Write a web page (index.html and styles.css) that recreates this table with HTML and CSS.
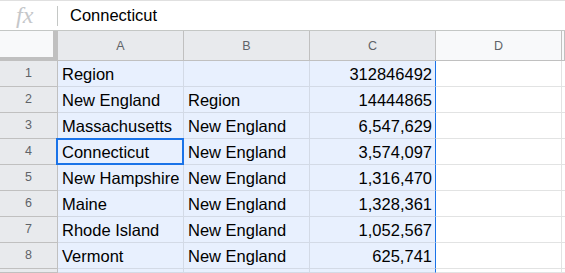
FILE: index.html
```html
<!DOCTYPE html>
<html>
<head>
<meta charset="utf-8">
<link rel="stylesheet" href="styles.css">
</head>
<body>
<div class="formula-bar">
  <span class="fx">fx</span>
  <span class="fsep"></span>
  <span class="fvalue">Connecticut</span>
</div>
<div class="grid">
  <div class="corner"></div>
  <div class="ch sel">A</div>
  <div class="ch sel">B</div>
  <div class="ch sel">C</div>
  <div class="ch">D</div>
  <div class="ch"></div>

  <div class="rh">1</div>
  <div class="c s">Region</div>
  <div class="c s"></div>
  <div class="c s num selr">312846492</div>
  <div class="c"></div><div class="c"></div>

  <div class="rh">2</div>
  <div class="c s">New England</div>
  <div class="c s">Region</div>
  <div class="c s num selr">14444865</div>
  <div class="c"></div><div class="c"></div>

  <div class="rh">3</div>
  <div class="c s">Massachusetts</div>
  <div class="c s">New England</div>
  <div class="c s num selr">6,547,629</div>
  <div class="c"></div><div class="c"></div>

  <div class="rh">4</div>
  <div class="c s active">Connecticut</div>
  <div class="c s">New England</div>
  <div class="c s num selr">3,574,097</div>
  <div class="c"></div><div class="c"></div>

  <div class="rh">5</div>
  <div class="c s">New Hampshire</div>
  <div class="c s">New England</div>
  <div class="c s num selr">1,316,470</div>
  <div class="c"></div><div class="c"></div>

  <div class="rh">6</div>
  <div class="c s">Maine</div>
  <div class="c s">New England</div>
  <div class="c s num selr">1,328,361</div>
  <div class="c"></div><div class="c"></div>

  <div class="rh">7</div>
  <div class="c s">Rhode Island</div>
  <div class="c s">New England</div>
  <div class="c s num selr">1,052,567</div>
  <div class="c"></div><div class="c"></div>

  <div class="rh">8</div>
  <div class="c s">Vermont</div>
  <div class="c s">New England</div>
  <div class="c s num selr">625,741</div>
  <div class="c"></div><div class="c"></div>

  <div class="rh"></div>
  <div class="c s"></div>
  <div class="c s"></div>
  <div class="c s num selr"></div>
  <div class="c"></div><div class="c"></div>
</div>
</body>
</html>
```
FILE: styles.css
```css
html, body {
  margin: 0;
  padding: 0;
  background: #fff;
  overflow: hidden;
}
body {
  width: 565px;
  height: 273px;
  font-family: "Liberation Sans", Arial, sans-serif;
}
.formula-bar {
  box-sizing: border-box;
  height: 31px;
  border-top: 1px solid #e0e0e0;
  border-bottom: 1px solid #c4c7c5;
  display: flex;
  align-items: center;
}
.fx {
  width: 57px;
  padding-left: 16px;
  box-sizing: border-box;
  font-family: "Liberation Serif", serif;
  font-style: italic;
  font-size: 24px;
  color: #c5c7ca;
  line-height: 1;
  margin-top: -2px;
}
.fsep {
  width: 1px;
  height: 20px;
  background: #c4c7c5;
  margin-right: 12px;
}
.fvalue {
  font-size: 16.5px;
  color: #000;
}
.grid {
  display: grid;
  grid-template-columns: 58px 126px 126px 126px 126px 3px;
  grid-template-rows: 30px repeat(8, 26px) 4px;
}
.corner {
  box-sizing: border-box;
  background: #f8f9fa;
  border-right: 5px solid #c0c0c0;
  border-bottom: 4px solid #c0c0c0;
}
.ch {
  box-sizing: border-box;
  background: #f8f9fa;
  border-right: 1px solid #c0c0c0;
  border-bottom: 1px solid #c0c0c0;
  color: #5f6368;
  font-size: 12.5px;
  display: flex;
  align-items: center;
  justify-content: center;
}
.ch.sel {
  background: #e8eaed;
}
.rh {
  box-sizing: border-box;
  background: #e8eaed;
  border-right: 1px solid #c0c0c0;
  border-bottom: 1px solid #c0c0c0;
  color: #5f6368;
  font-size: 12.5px;
  display: flex;
  align-items: center;
  justify-content: center;
  padding-bottom: 2px;
}
.c {
  box-sizing: border-box;
  border-right: 1px solid #e2e3e3;
  border-bottom: 1px solid #e2e3e3;
  font-size: 16.5px;
  color: #000;
  display: flex;
  align-items: center;
  padding: 1px 3px 0 4px;
  white-space: nowrap;
  overflow: hidden;
  position: relative;
}
.c.s {
  background: #e8f0fe;
  border-right-color: #d3dae6;
  border-bottom-color: #d3dae6;
}
.c.num {
  justify-content: flex-end;
}
.c.selr {
  border-right: 1px solid #1a73e8;
}
.c.active {
  overflow: visible;
  z-index: 1;
}
.c.active::after {
  content: "";
  position: absolute;
  left: -2px;
  top: -1px;
  right: -1px;
  bottom: -1px;
  border: 2px solid #1a73e8;
}
```
